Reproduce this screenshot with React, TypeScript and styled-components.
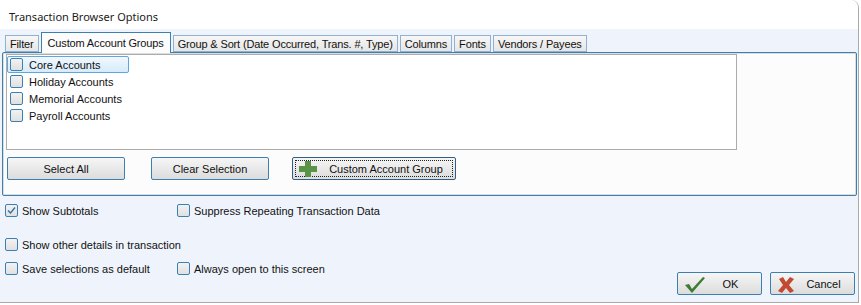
import React from 'react';
import styled, { createGlobalStyle } from 'styled-components';

const Global = createGlobalStyle`
  body {
    margin: 0;
    background: #ffffff;
    font-family: 'Liberation Sans', Arial, sans-serif;
  }
`;

const Window = styled.div`
  width: 858px;
  height: 302px;
  border-right: 1px solid #a9a9a9;
  border-bottom: 1px solid #a9a9a9;
  border-top-right-radius: 8px;
  overflow: hidden;
  display: flex;
  flex-direction: column;
  background: #eff4fc;
`;

const TitleBar = styled.div`
  height: 29px;
  flex: none;
  background: #ffffff;
  display: flex;
  align-items: center;
  padding-left: 9px;
  padding-top: 3px;
  box-sizing: border-box;
  font-family: 'Noto Sans', 'Open Sans', sans-serif;
  font-size: 11px;
  color: #1a1a1a;
`;

const Body = styled.div`
  flex: 1;
  display: flex;
  flex-direction: column;
  padding: 2px 1px 0 2px;
`;

const TabStrip = styled.div`
  display: flex;
  align-items: flex-end;
  height: 21px;
  padding-left: 3px;
  gap: 2px;
  position: relative;
  z-index: 1;
`;

const Tab = styled.div<{ $active?: boolean }>`
  height: ${(p) => (p.$active ? 21 : 17)}px;
  box-sizing: border-box;
  padding: 0 ${(p) => (p.$active ? 6 : 4)}px;
  margin-bottom: ${(p) => (p.$active ? -1 : 0)}px;
  border: 1px solid ${(p) => (p.$active ? '#3c7fb1' : '#8fb2d3')};
  border-bottom: ${(p) => (p.$active ? 'none' : '1px solid #8fb2d3')};
  background: ${(p) => (p.$active ? '#fcfcfc' : 'linear-gradient(#f7f7f7, #e6e6e6)')};
  font-size: 11px;
  letter-spacing: -0.15px;
  color: #111;
  display: flex;
  align-items: center;
  white-space: nowrap;
`;

const Panel = styled.div`
  height: 144px;
  box-sizing: border-box;
  border: 1px solid #3c7fb1;
  border-radius: 2px;
  background: #fcfcfc;
  box-shadow: inset 0 0 0 1px #dcdcdc;
  padding: 1px 3px 2px 3px;
  display: flex;
  flex-direction: column;
`;

const ListBox = styled.div`
  width: 731px;
  height: 96px;
  box-sizing: border-box;
  border: 1px solid #acacac;
  background: #ffffff;
  padding: 1px 0 0 0;
`;

const ListItem = styled.div<{ $selected?: boolean }>`
  display: flex;
  align-items: center;
  gap: 6px;
  width: 122px;
  height: 17px;
  box-sizing: border-box;
  padding-left: 2px;
  border: 1px solid ${(p) => (p.$selected ? '#5ea6dd' : 'transparent')};
  border-radius: 2px;
  background: ${(p) => (p.$selected ? 'linear-gradient(#f1f8fe, #d6ebfb)' : 'transparent')};
  font-size: 11px;
  color: #111;
  white-space: nowrap;
`;

const Box = styled.span`
  width: 13px;
  height: 13px;
  flex: none;
  box-sizing: border-box;
  border: 1px solid #3c7fb1;
  border-radius: 2px;
  background: linear-gradient(#f2f2f2, #e0e0e0);
  display: flex;
  align-items: center;
  justify-content: center;
`;

const ButtonRow = styled.div`
  display: flex;
  margin-top: 7px;
  padding-left: 1px;
`;

const Button = styled.div<{ $w: number; $ml?: number; $focus?: boolean }>`
  width: ${(p) => p.$w}px;
  height: 23px;
  margin-left: ${(p) => p.$ml ?? 0}px;
  box-sizing: border-box;
  border: 1px solid ${(p) => (p.$focus ? '#2f5f86' : '#3c7fb1')};
  border-radius: 2px;
  background: linear-gradient(#f6f6f6, #dcdcdc);
  display: flex;
  align-items: center;
  justify-content: center;
  font-size: 11px;
  color: #111;
  position: relative;
  outline: ${(p) => (p.$focus ? '1px dotted #222' : 'none')};
  outline-offset: -4px;
`;

const ButtonIcon = styled.span`
  position: absolute;
  left: 6px;
  top: 3px;
  display: flex;
`;

const Label = styled.span<{ $shift: number }>`
  margin-left: ${(p) => p.$shift}px;
`;

const Options = styled.div`
  display: flex;
  flex-direction: column;
  padding: 7px 0 0 3px;
  position: relative;
  flex: 1;
`;

const OptionRow = styled.div<{ $mt?: number }>`
  display: flex;
  margin-top: ${(p) => p.$mt ?? 0}px;
`;

const Option = styled.label<{ $w?: number }>`
  display: flex;
  align-items: center;
  gap: 4px;
  width: ${(p) => (p.$w ? `${p.$w}px` : 'auto')};
  height: 15px;
  font-size: 11px;
  color: #111;
  white-space: nowrap;
`;

const Footer = styled.div`
  position: absolute;
  right: 2px;
  bottom: 7px;
  display: flex;
  gap: 8px;
`;

const Check = () => (
  <svg width="9" height="9" viewBox="0 0 9 9">
    <path d="M1 4.5 L3.5 7 L8 1.5" fill="none" stroke="#2f6ea5" strokeWidth="1.3" />
  </svg>
);

const Plus = () => (
  <svg width="18" height="16" viewBox="0 0 18 16">
    <rect x="6" y="0" width="6" height="16" fill="#5b9347" />
    <rect x="0" y="5" width="18" height="6" fill="#5b9347" />
  </svg>
);

const Tick = () => (
  <svg width="22" height="18" viewBox="0 0 22 18">
    <path d="M1 9 L5 8 L8 13 L19 1 L21 2 L8 17 Z" fill="#3d7a32" />
  </svg>
);

const Cross = () => (
  <svg width="18" height="18" viewBox="0 0 18 18">
    <path d="M2 3 L6 1 L9 6 L13 1 L17 3 L12 9 L17 15 L13 17 L9 12 L5 17 L1 15 L6 9 Z" fill="#c24a32" />
  </svg>
);

const accounts = ['Core Accounts', 'Holiday Accounts', 'Memorial Accounts', 'Payroll Accounts'];

const App = () => {
  return (
    <>
      <Global />
      <Window>
        <TitleBar>Transaction Browser Options</TitleBar>
        <Body>
          <TabStrip>
            <Tab>Filter</Tab>
            <Tab $active>Custom Account Groups</Tab>
            <Tab>Group &amp; Sort (Date Occurred, Trans. #, Type)</Tab>
            <Tab>Columns</Tab>
            <Tab>Fonts</Tab>
            <Tab>Vendors / Payees</Tab>
          </TabStrip>
          <Panel>
            <ListBox>
              {accounts.map((a, i) => (
                <ListItem key={a} $selected={i === 0}>
                  <Box />
                  {a}
                </ListItem>
              ))}
            </ListBox>
            <ButtonRow>
              <Button $w={118}>Select All</Button>
              <Button $w={118} $ml={26}>Clear Selection</Button>
              <Button $w={164} $ml={23} $focus>
                <ButtonIcon>
                  <Plus />
                </ButtonIcon>
                <Label $shift={24}>Custom Account Group</Label>
              </Button>
            </ButtonRow>
          </Panel>
          <Options>
            <OptionRow>
              <Option $w={172}>
                <Box>
                  <Check />
                </Box>
                Show Subtotals
              </Option>
              <Option>
                <Box />
                Suppress Repeating Transaction Data
              </Option>
            </OptionRow>
            <OptionRow $mt={19}>
              <Option>
                <Box />
                Show other details in transaction
              </Option>
            </OptionRow>
            <OptionRow $mt={9}>
              <Option $w={172}>
                <Box />
                Save selections as default
              </Option>
              <Option>
                <Box />
                Always open to this screen
              </Option>
            </OptionRow>
            <Footer>
              <Button $w={85}>
                <ButtonIcon>
                  <Tick />
                </ButtonIcon>
                <Label $shift={22}>OK</Label>
              </Button>
              <Button $w={85}>
                <ButtonIcon>
                  <Cross />
                </ButtonIcon>
                <Label $shift={22}>Cancel</Label>
              </Button>
            </Footer>
          </Options>
        </Body>
      </Window>
    </>
  );
};

export default App;
